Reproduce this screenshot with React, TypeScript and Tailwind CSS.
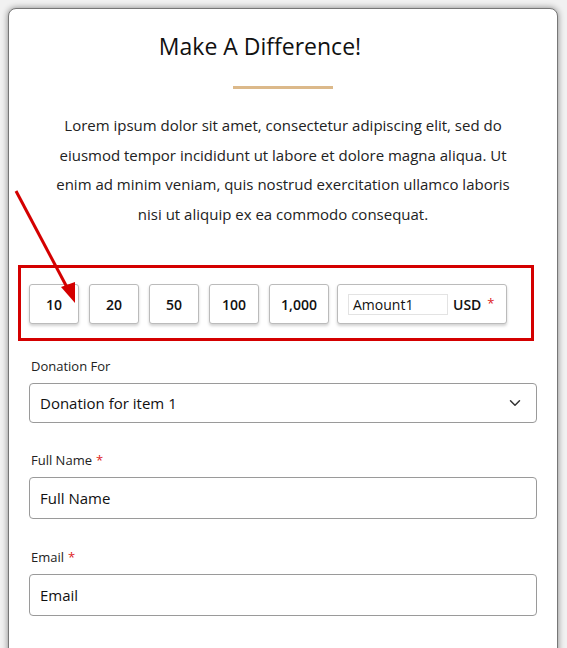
import { ChevronDown } from 'lucide-react';

const amounts = ['10', '20', '50', '100', '1,000'];

function Field({ label, required, children }: { label: string; required?: boolean; children: React.ReactNode }) {
  return (
    <div className="flex flex-col">
      <label className="text-[13px] leading-[18px] text-[#222] pl-[2px]">
        {label}
        {required && <span className="text-[#d22] ml-1">*</span>}
      </label>
      <div className="mt-2">{children}</div>
    </div>
  );
}

export default function App() {
  return (
    <div className="min-h-screen bg-[#f1f1f1] pt-2 pl-2 overflow-hidden font-['Open_Sans',sans-serif] text-[#111]">
      <div className="relative w-[550px] min-h-[700px] rounded-t-lg border border-[#777] bg-white shadow-[0_0_6px_rgba(0,0,0,0.45)] px-5 pt-[21px]">
        <h1 className="pr-[46px] text-center text-[23px] leading-8 text-[#111]">Make A Difference!</h1>
        <div className="mx-auto mt-6 h-[3px] w-[100px] bg-[#dcb98a]" />
        <p className="mx-auto mt-[22px] w-[476px] text-center text-[15px] leading-[29.5px] text-[#222]">
          Lorem ipsum dolor sit amet, consectetur adipiscing elit, sed do eiusmod tempor incididunt ut labore et dolore magna aliqua. Ut enim ad minim veniam, quis nostrud exercitation ullamco laboris nisi ut aliquip ex ea commodo consequat.
        </p>

        <div className="-ml-[11px] mt-9 flex w-[516px] items-center gap-[10px] border-[3px] border-[#d40000] pl-2 pt-4 pb-[14px]">
          {amounts.map((a) => (
            <button
              key={a}
              type="button"
              className={`h-10 ${a === '1,000' ? 'w-[60px]' : 'w-[50px]'} rounded-[3px] border border-[#bbb] bg-white text-[14px] font-semibold text-[#111] shadow-[0_2px_3px_rgba(0,0,0,0.18)]`}
            >
              {a}
            </button>
          ))}
          <div className="ml-[-2px] flex h-10 w-[170px] items-center rounded-[3px] border border-[#bbb] bg-white pl-[10px] shadow-[0_2px_3px_rgba(0,0,0,0.18)]">
            <div className="flex h-[21px] w-[100px] items-center border border-[#e3e3e3] px-1 text-[14px] text-[#111]">
              Amount1
            </div>
            <span className="ml-[5px] text-[14px] font-semibold">USD</span>
            <span className="ml-[6px] text-[13px] text-[#d22]">*</span>
          </div>
        </div>

        <div className="mt-4 flex flex-col">
          <Field label="Donation For">
            <div className="flex h-10 items-center justify-between rounded-[4px] border border-[#9a9a9a] pl-[10px] pr-[12px] text-[15px] text-[#111]">
              <span>Donation for item 1</span>
              <ChevronDown className="h-[18px] w-[18px] text-[#333]" strokeWidth={2} />
            </div>
          </Field>
          <div className="mt-7">
            <Field label="Full Name" required>
              <div className="flex h-[42px] items-center rounded-[4px] border border-[#9a9a9a] pl-[10px] text-[15px] text-[#111]">
                Full Name
              </div>
            </Field>
          </div>
          <div className="mt-[29px]">
            <Field label="Email" required>
              <div className="flex h-[42px] items-center rounded-[4px] border border-[#9a9a9a] pl-[10px] text-[15px] text-[#111]">
                Email
              </div>
            </Field>
          </div>
        </div>

        <svg className="pointer-events-none absolute left-[-9px] top-[172px]" width="80" height="130" viewBox="0 0 80 130">
          <line x1="16" y1="10" x2="70" y2="112" stroke="#d40000" strokeWidth="3" />
          <polygon points="75,122 61,106 75,101" fill="#d40000" />
        </svg>
      </div>
    </div>
  );
}
